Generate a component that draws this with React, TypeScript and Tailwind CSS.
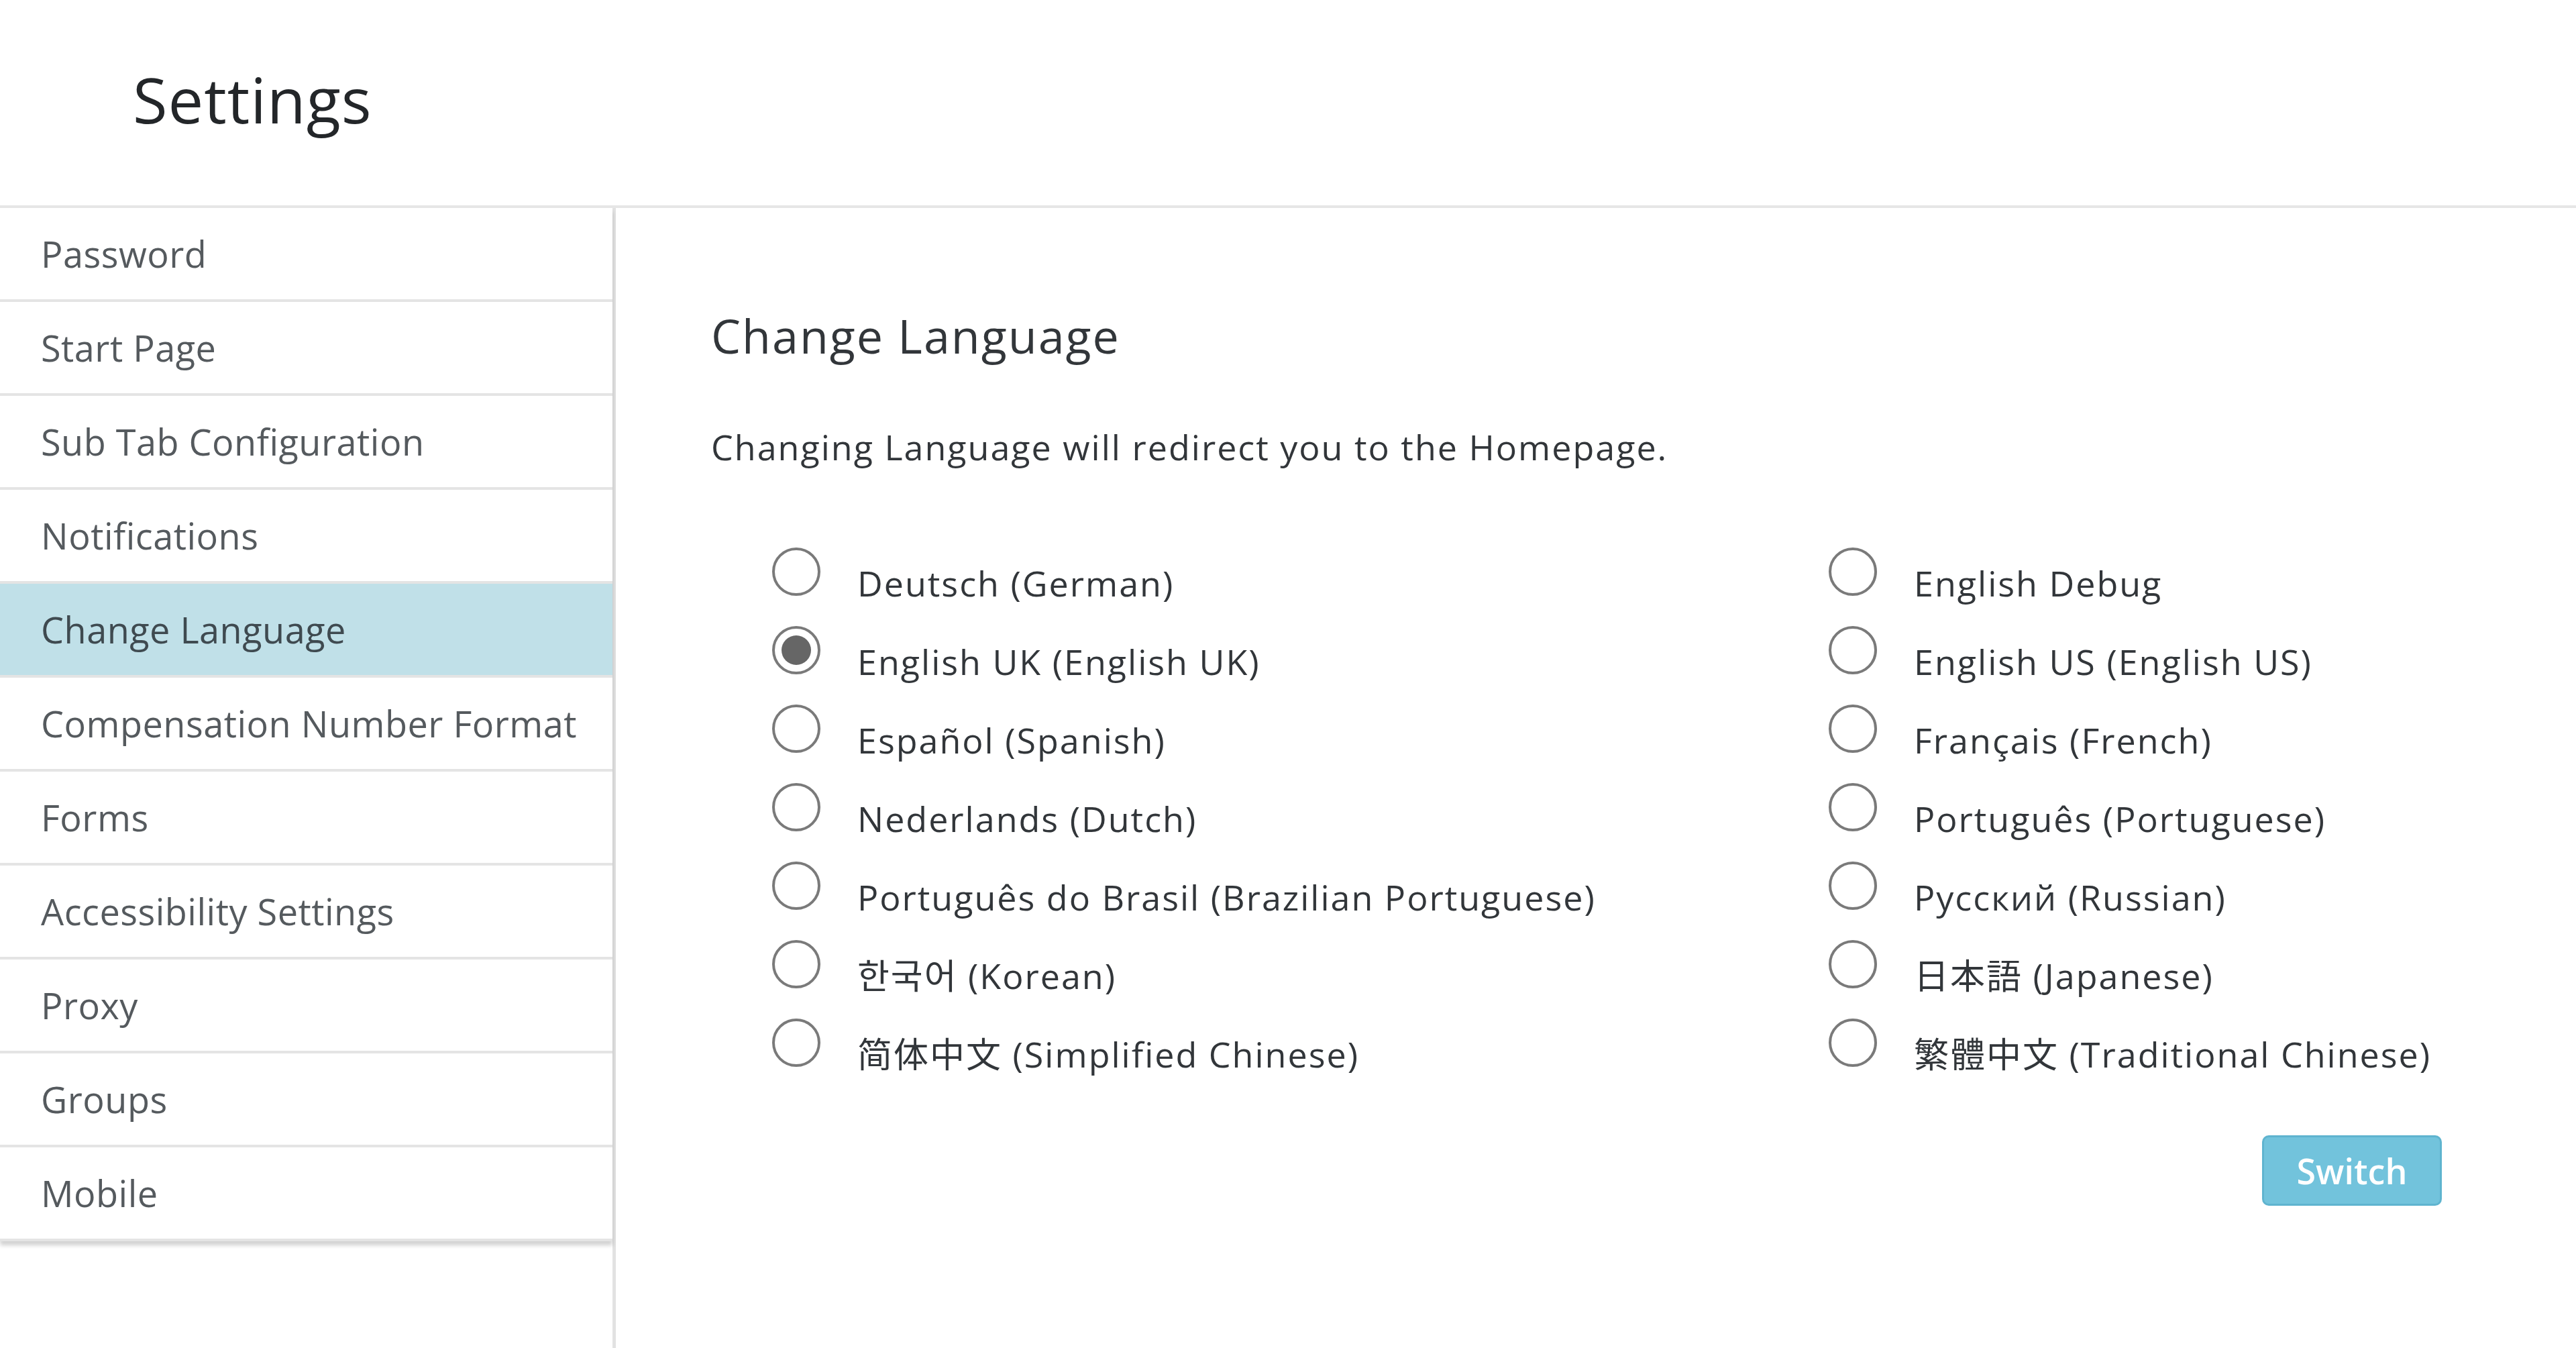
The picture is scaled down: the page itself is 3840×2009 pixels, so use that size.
const menu = [
  'Password',
  'Start Page',
  'Sub Tab Configuration',
  'Notifications',
  'Change Language',
  'Compensation Number Format',
  'Forms',
  'Accessibility Settings',
  'Proxy',
  'Groups',
  'Mobile',
]

const leftLangs = [
  'Deutsch (German)',
  'English UK (English UK)',
  'Español (Spanish)',
  'Nederlands (Dutch)',
  'Português do Brasil (Brazilian Portuguese)',
  '한국어 (Korean)',
  '简体中文 (Simplified Chinese)',
]

const rightLangs = [
  'English Debug',
  'English US (English US)',
  'Français (French)',
  'Português (Portuguese)',
  'Русский (Russian)',
  '日本語 (Japanese)',
  '繁體中文 (Traditional Chinese)',
]

function Radio({ label, checked }: { label: string; checked?: boolean }) {
  return (
    <div className="flex h-[117px] items-start gap-[55px]">
      <span className="mt-[22px] flex h-[72px] w-[72px] shrink-0 items-center justify-center rounded-full border-[4px] border-[#7a7a7a] bg-white">
        {checked && <span className="h-[44px] w-[44px] rounded-full bg-[#666]" />}
      </span>
      <span className="mt-[39px] whitespace-nowrap text-[52px] leading-[72px] tracking-[2px] text-[#32363a]">{label}</span>
    </div>
  )
}

export default function App() {
  return (
    <div
      className="flex h-[2009px] w-[3840px] flex-col overflow-hidden bg-white"
      style={{ fontFamily: '"Open Sans", "Noto Sans CJK KR", "Noto Sans CJK JP", sans-serif' }}
    >
      <header className="flex h-[310px] shrink-0 items-center border-b-[4px] border-[#e6e6e6] pl-[198px]">
        <h1 className="mb-[10px] text-[94px] leading-none tracking-[1px] text-[#232629]">Settings</h1>
      </header>

      <div className="flex flex-1">
        <aside className="w-[918px] shrink-0 border-r-[5px] border-[#e2e2e2]">
          <ul className="shadow-[0_6px_6px_rgba(0,0,0,0.18)]">
            {menu.map((item) => (
              <li
                key={item}
                className={
                  'flex h-[140px] items-center border-b-[4px] border-[#e4e4e4] pl-[61px] text-[54px] tracking-[0.5px] ' +
                  (item === 'Change Language' ? 'bg-[#c0e0e8] text-[#3f4a50]' : 'bg-white text-[#555a5e]')
                }
              >
                {item}
              </li>
            ))}
          </ul>
        </aside>

        <main className="w-[2722px] pl-[142px] pt-[148px]">
          <h2 className="text-[70px] leading-[84px] tracking-[2px] text-[#32363a]">Change Language</h2>
          <p className="mt-[93px] text-[52px] leading-[62px] tracking-[2px] text-[#32363a]">
            Changing Language will redirect you to the Homepage.
          </p>

          <div className="mt-[97px] grid grid-cols-[1575px_1fr] pl-[91px]">
            <div>
              {leftLangs.map((l) => (
                <Radio key={l} label={l} checked={l.startsWith('English UK')} />
              ))}
            </div>
            <div>
              {rightLangs.map((l) => (
                <Radio key={l} label={l} />
              ))}
            </div>
          </div>

          <div className="mt-[79px] flex w-[2580px] justify-end">
            <button className="h-[105px] w-[268px] rounded-[10px] border-[3px] border-[#5fb4cf] bg-[#72c3dc] text-[52px] font-semibold text-white">
              Switch
            </button>
          </div>
        </main>
      </div>
    </div>
  )
}
